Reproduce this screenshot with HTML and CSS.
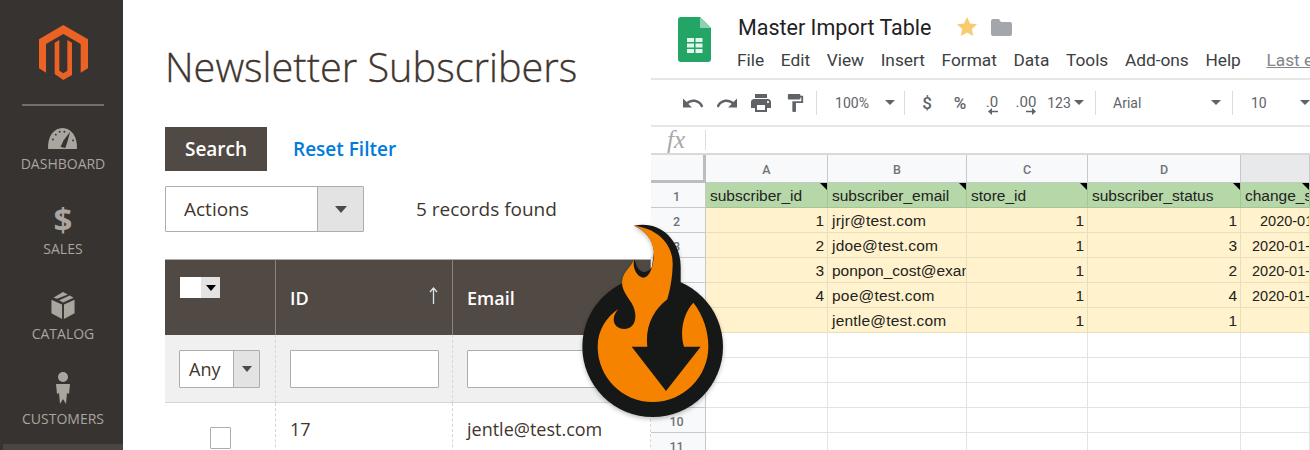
FILE: index.html
```html
<!DOCTYPE html>
<html lang="en">
  <head>
    <meta charset="UTF-8" />
    <title>Newsletter Subscribers to Master Import Table</title>
    <link rel="stylesheet" href="styles.css">
  </head>
  <body>
    <div class="admin">
      <nav class="sidebar">
        <svg class="magento-logo" viewBox="115 75 147 165">
          <path fill="#ec6124" d="M188 75L262 118V205L240 218V132L188 102L136 132V218L115 205V118Z"/>
          <path fill="#ec6124" d="M176 120L162 128V222L188 240L214 225V128L200 120V212L188 220L176 212Z"/>
        </svg>
        <div class="nav-rule"></div>
        <a class="nav-item nav-dashboard">
          <svg class="nav-icon" width="31" height="22" viewBox="0 0 32 23">
            <path fill="#aaa59f" d="M1 23C0 10 7 1 16 1S32 10 31 23Z"/>
            <path fill="#373330" d="M14 21L17 14L24 5L21 16L19 22Z"/>
            <g fill="#373330"><circle cx="6" cy="13" r="1"/><circle cx="9" cy="8" r="1"/><circle cx="13" cy="5" r="1"/><circle cx="18" cy="5" r="1"/><circle cx="27" cy="14" r="1"/></g>
          </svg>
          <span>DASHBOARD</span>
        </a>
        <a class="nav-item">
          <span class="dollar">$</span>
          <span>SALES</span>
        </a>
        <a class="nav-item">
          <svg class="nav-icon" width="26" height="27" viewBox="0 0 26 28">
            <path fill="#aaa59f" d="M1 8L12 13V28L1 22Z"/>
            <path fill="#aaa59f" d="M25 8L14 13V28L25 22Z"/>
            <path fill="#aaa59f" d="M13 0L18 2.500L7 7L3 6Z"/>
            <path fill="#aaa59f" d="M20 3.500L24 6L13 11L9 8.500Z"/>
          </svg>
          <span>CATALOG</span>
        </a>
        <a class="nav-item">
          <svg class="nav-icon" width="16" height="32" viewBox="0 0 16 32">
            <circle cx="8" cy="5" r="5" fill="#aaa59f"/>
            <path fill="#aaa59f" d="M1 12H15L14 22L12 21L11 32L8 27L5 32L4 21L2 22Z"/>
          </svg>
          <span>CUSTOMERS</span>
        </a>
        <div class="nav-current"></div>
      </nav>

      <main class="content">
        <h1 class="page-title">Newsletter Subscribers</h1>
        <div class="filter-actions">
          <button class="btn-search">Search</button>
          <a class="reset-link">Reset Filter</a>
        </div>
        <div class="mass-actions">
          <div class="select select-actions">
            <span class="select-label">Actions</span>
            <span class="select-arrow"><i class="caret"></i></span>
          </div>
          <span class="records">5 records found</span>
        </div>
        <div class="grid-table">
          <div class="th th-check">
            <div class="th-select"><span class="th-box"></span><span class="th-arrow"><i class="caret caret-black"></i></span></div>
          </div>
          <div class="th th-id">
            <span>ID</span>
            <svg class="sort-arrow" width="9" height="17" viewBox="0 0 9 17"><path fill="none" stroke="#d9e6f0" stroke-width="1.300" d="M4.500 17V1M1 5L4.500 1L8 5"/></svg>
          </div>
          <div class="th"><span>Email</span></div>
          <div class="filter-cell">
            <div class="select select-any">
              <span class="select-label">Any</span>
              <span class="select-arrow"><i class="caret"></i></span>
            </div>
          </div>
          <div class="filter-cell"><div class="filter-input"></div></div>
          <div class="filter-cell"><div class="filter-input"></div></div>
          <div class="td td-check"><span class="checkbox"></span></div>
          <div class="td">17</div>
          <div class="td">jentle@test.com</div>
        </div>
      </main>
    </div>

    <section class="sheets">
      <header class="doc-head">
        <svg class="sheets-logo" width="33" height="45" viewBox="0 0 33 45">
          <path fill="#23a566" d="M3 0H22L33 11V42Q33 45 30 45H3Q0 45 0 42V3Q0 0 3 0Z"/>
          <path fill="#8ed1b1" d="M22 0L33 11H22Z"/>
          <g fill="#e4f5ec">
            <rect x="9" y="21" width="7" height="4"/><rect x="17.500" y="21" width="7" height="4"/>
            <rect x="9" y="26.500" width="7" height="4"/><rect x="17.500" y="26.500" width="7" height="4"/>
            <rect x="9" y="32" width="7" height="4"/><rect x="17.500" y="32" width="7" height="4"/>
          </g>
        </svg>
        <div class="doc-info">
          <div class="doc-title-row">
            <span class="doc-title">Master Import Table</span>
            <svg class="star" width="20" height="19" viewBox="0 0 20 19"><path fill="#f7cb6e" d="M10 0L13 6.500L20 7.200L14.800 12L16.200 19L10 15.500L3.800 19L5.200 12L0 7.200L7 6.500Z"/></svg>
            <svg class="folder" width="21" height="17" viewBox="0 0 21 17"><path fill="#a3a6aa" d="M2 0H8L10 3H19Q21 3 21 5V15Q21 17 19 17H2Q0 17 0 15V2Q0 0 2 0Z"/></svg>
          </div>
          <div class="menu">
            <span>File</span><span>Edit</span><span>View</span><span>Insert</span><span>Format</span><span>Data</span><span>Tools</span><span>Add-ons</span><span>Help</span><span class="last-edit">Last edit</span>
          </div>
        </div>
      </header>

      <div class="toolbar">
        <svg width="20" height="10" viewBox="2 7 20 9"><path fill="#5f6368" d="M12.500 8c-2.650 0-5.050.99-6.900 2.600L2 7v9h9l-3.620-3.620c1.390-1.160 3.160-1.880 5.120-1.880 3.540 0 6.550 2.310 7.600 5.500l2.370-.78C21.080 11.030 17.150 8 12.500 8z"/></svg>
        <svg width="20" height="10" viewBox="2 7 20 9"><path fill="#5f6368" d="M18.400 10.600C16.550 8.990 14.150 8 11.500 8c-4.650 0-8.580 3.030-9.960 7.220L3.900 16c1.050-3.190 4.050-5.500 7.600-5.500 1.950 0 3.730.72 5.120 1.880L13 16h9V7l-3.600 3.600z"/></svg>
        <svg width="20" height="18" viewBox="2 3 20 18"><path fill="#5f6368" d="M19 8H5c-1.660 0-3 1.340-3 3v6h4v4h12v-4h4v-6c0-1.660-1.340-3-3-3zm-3 11H8v-5h8v5zm3-7c-.55 0-1-.45-1-1s.45-1 1-1 1 .45 1 1-.45 1-1 1zm-1-9H6v4h12V3z"/></svg>
        <svg width="17" height="18" viewBox="4 2 17 20"><path fill="#5f6368" d="M18 4V3c0-.55-.45-1-1-1H5c-.55 0-1 .45-1 1v4c0 .55.45 1 1 1h12c.55 0 1-.45 1-1V6h1v4H9v11c0 .55.45 1 1 1h2c.55 0 1-.45 1-1v-9h8V4h-3z"/></svg>
        <i class="tb-sep"></i>
        <span class="tb-text">100%</span>
        <i class="tb-caret"></i>
        <i class="tb-sep"></i>
        <span class="tb-text tb-strong">$</span>
        <span class="tb-text tb-strong">%</span>
        <span class="tb-dec">.0
          <svg class="dec-arrow" width="10" height="7" viewBox="0 0 10 7"><path fill="#5f6368" d="M0 3.500L4 0V2.700H10V4.300H4V7Z"/></svg>
        </span>
        <span class="tb-dec">.00
          <svg class="dec-arrow" width="10" height="7" viewBox="0 0 10 7"><path fill="#5f6368" d="M10 3.500L6 0V2.700H0V4.300H6V7Z"/></svg>
        </span>
        <span class="tb-text">123</span>
        <i class="tb-caret"></i>
        <i class="tb-sep"></i>
        <span class="tb-text tb-left">Arial</span>
        <i class="tb-caret"></i>
        <i class="tb-sep"></i>
        <span class="tb-text tb-left">10</span>
        <i class="tb-caret"></i>
      </div>

      <div class="formula-bar">
        <span class="fx">fx</span>
        <i class="fx-sep"></i>
      </div>

      <div class="sheet">
        <div class="corner"></div>
        <div class="col-head">A</div>
        <div class="col-head">B</div>
        <div class="col-head">C</div>
        <div class="col-head">D</div>
        <div class="col-head col-next"></div>

        <div class="row-head">1</div>
        <div class="cell green note">subscriber_id</div>
        <div class="cell green note">subscriber_email</div>
        <div class="cell green note">store_id</div>
        <div class="cell green note">subscriber_status</div>
        <div class="cell green note">change_status_at</div>

        <div class="row-head">2</div>
        <div class="cell yellow num">1</div>
        <div class="cell yellow email">jrjr@test.com</div>
        <div class="cell yellow num">1</div>
        <div class="cell yellow num">1</div>
        <div class="cell yellow date date-short">2020-01-20</div>

        <div class="row-head">3</div>
        <div class="cell yellow num">2</div>
        <div class="cell yellow email">jdoe@test.com</div>
        <div class="cell yellow num">1</div>
        <div class="cell yellow num">3</div>
        <div class="cell yellow date">2020-01-20</div>

        <div class="row-head">4</div>
        <div class="cell yellow num">3</div>
        <div class="cell yellow">ponpon_cost@example.com</div>
        <div class="cell yellow num">1</div>
        <div class="cell yellow num">2</div>
        <div class="cell yellow date">2020-01-20</div>

        <div class="row-head">5</div>
        <div class="cell yellow num">4</div>
        <div class="cell yellow email">poe@test.com</div>
        <div class="cell yellow num">1</div>
        <div class="cell yellow num">4</div>
        <div class="cell yellow date">2020-01-20</div>

        <div class="row-head">6</div>
        <div class="cell yellow num"></div>
        <div class="cell yellow email">jentle@test.com</div>
        <div class="cell yellow num">1</div>
        <div class="cell yellow num">1</div>
        <div class="cell yellow date"></div>

        <div class="row-head">7</div>
        <div class="cell"></div><div class="cell"></div><div class="cell"></div><div class="cell"></div><div class="cell"></div>
        <div class="row-head">8</div>
        <div class="cell"></div><div class="cell"></div><div class="cell"></div><div class="cell"></div><div class="cell"></div>
        <div class="row-head">9</div>
        <div class="cell"></div><div class="cell"></div><div class="cell"></div><div class="cell"></div><div class="cell"></div>
        <div class="row-head">10</div>
        <div class="cell"></div><div class="cell"></div><div class="cell"></div><div class="cell"></div><div class="cell"></div>
        <div class="row-head">11</div>
        <div class="cell"></div><div class="cell"></div><div class="cell"></div><div class="cell"></div><div class="cell"></div>
      </div>
    </section>

    <!-- badge sits on top of both screenshots -->
    <svg class="flame-badge" width="180" height="220" viewBox="0 0 540 660">
      <circle cx="278" cy="410" r="211" fill="#161818"/>
      <path fill="#161818" d="M222 47C300 30 362 90 362 170V260H300L270 215L282 125C280 90 255 60 222 47Z"/>
      <path fill="#161818" d="M224 148C228 172 240 186 252 186C262 186 272 180 279 165L290 205L240 215L210 190Z"/>
      <path fill="#f58300" d="M222 47C290 55 340 100 338 165C337 205 330 240 322 268C280 300 255 350 262 410H215L318 543L422 410H372C358 365 370 310 400 278C430 315 445 365 445 410C445 500 370 576 278 576C186 576 113 500 113 410C113 360 140 320 175 297C150 325 160 358 195 357C228 355 235 315 215 280C200 255 180 235 188 205C195 180 215 170 222 148C216 180 235 203 250 203C270 203 283 165 281 125C279 90 255 60 222 47Z"/>
    </svg>
  </body>
</html>
```

FILE: styles.css
```css
* {
  box-sizing: border-box;
}
html, body {
  height: 450px;
  overflow: hidden;
}
body {
  margin: 0;
  display: flex;
  background-color: #ffffff;
  position: relative;
}

/* left side, the shop admin */
.admin {
  width: 651px;
  height: 450px;
  flex: none;
  display: flex;
  overflow: hidden;
  font-family: "Open Sans", sans-serif;
  color: #41362f;
}
.sidebar {
  width: 123px;
  flex: none;
  height: 450px;
  background-color: #373330;
  display: flex;
  flex-direction: column;
  align-items: center;
  padding: 25px 0 0 3px;
  overflow: hidden;
}
.magento-logo {
  width: 49px;
  height: 55px;
  flex: none;
}
.nav-rule {
  width: 82px;
  height: 2px;
  background-color: #736e69;
  margin-top: 24px;
  flex: none;
}
.nav-item {
  height: 85px;
  display: flex;
  flex-direction: column;
  align-items: center;
  justify-content: flex-end;
  gap: 6px;
  font-size: 14px;
  line-height: 18px;
  color: #aaa59f;
  flex: none;
}
.nav-icon {
  display: block;
  flex: none;
}
.nav-dashboard {
  height: 67px;
}
.dollar {
  font-size: 33px;
  line-height: 28px;
  font-weight: 700;
}
.nav-current {
  align-self: stretch;
  height: 20px;
  margin-top: 16px;
  background-color: #4a4542;
  flex: none;
}

.content {
  flex: none;
  width: 528px;
  padding-left: 42px;
}
.page-title {
  margin: 0;
  padding-top: 41px;
  font-size: 39.700px;
  line-height: 52px;
  font-weight: 300;
  color: #41362f;
  -webkit-text-stroke: 0.3px #41362f;
  white-space: nowrap;
}
.filter-actions {
  display: flex;
  align-items: center;
  margin-top: 34px;
}
.btn-search {
  width: 102px;
  height: 44px;
  border: 0;
  background-color: #514943;
  color: #ffffff;
  font-family: "Open Sans", sans-serif;
  font-size: 19px;
  font-weight: 600;
  padding: 0;
}
.reset-link {
  margin-left: 26px;
  color: #007bdb;
  font-size: 19px;
  font-weight: 600;
}
.mass-actions {
  display: flex;
  align-items: center;
  margin-top: 15px;
}
.select {
  display: flex;
  background-color: #ffffff;
  border: 1px solid #adadad;
  border-radius: 1px;
}
.select-actions {
  width: 199px;
  height: 46px;
}
.select-label {
  flex: 1;
  display: flex;
  align-items: center;
  font-size: 18px;
}
.select-actions .select-label {
  padding-left: 18px;
  font-size: 19px;
}
.select-any .select-label {
  padding-left: 9px;
}
.select-arrow {
  width: 46px;
  flex: none;
  display: flex;
  align-items: center;
  justify-content: center;
  background-color: #e3e3e3;
  border-left: 1px solid #adadad;
}
.caret {
  display: block;
  width: 0;
  height: 0;
  border-left: 6px solid transparent;
  border-right: 6px solid transparent;
  border-top: 7px solid #514943;
}
.caret-black {
  border-left-width: 5px;
  border-right-width: 5px;
  border-top: 6px solid #000000;
}
.records {
  margin-left: 52px;
  font-size: 19px;
}

.grid-table {
  display: grid;
  grid-template-columns: 111px 177px 198px;
  grid-template-rows: 76px 68px auto;
  margin-top: 27px;
  width: 486px;
}
.th {
  background-color: #514943;
  color: #ffffff;
  font-size: 18px;
  font-weight: 600;
  padding: 26px 14px 0;
  border-right: 1px solid #8a837e;
  border-top: 1px solid #adadad;
  display: flex;
  justify-content: space-between;
  white-space: nowrap;
}
.th:last-of-type {
  border-right: 0;
}
.th-check {
  padding: 17px 15px 0;
}
.th-select {
  display: flex;
  width: 40px;
  height: 21px;
}
.th-box {
  width: 21px;
  background-color: #ffffff;
}
.th-arrow {
  width: 19px;
  background-color: #e3e3e3;
  display: flex;
  align-items: center;
  justify-content: center;
}
.sort-arrow {
  margin-top: 1px;
  margin-right: 0;
}
.filter-cell {
  background-color: #f0f0f0;
  padding: 15px 14px 0;
  border-right: 1px dashed #d6d6d6;
  border-bottom: 1px solid #d6d6d6;
}
.filter-cell .select-any {
  width: 81px;
  height: 38px;
}
.select-any .select-arrow {
  width: 26px;
}
.select-any .caret {
  border-left-width: 5px;
  border-right-width: 5px;
  border-top-width: 6px;
}
.filter-input {
  width: 149px;
  height: 38px;
  background-color: #ffffff;
  border: 1px solid #adadad;
  border-radius: 1px;
}
.filter-cell:last-of-type {
  border-right: 0;
}
.td {
  padding: 14px 14px 0;
  font-size: 18px;
  height: 60px;
  border-right: 1px dashed #d6d6d6;
  white-space: nowrap;
}
.td:first-of-type {
  border-left: 1px solid #d6d6d6;
}
.td-check {
  padding: 24px 0 0 45px;
}
.checkbox {
  display: block;
  width: 21px;
  height: 22px;
  border: 1px solid #adadad;
  border-radius: 1px;
}

/* right side, the spreadsheet */
.sheets {
  width: 659px;
  flex: none;
  height: 450px;
  overflow: hidden;
  font-family: Roboto, sans-serif;
  color: #3c4043;
}
.doc-head {
  display: flex;
  height: 78px;
  padding: 17px 0 0 27px;
}
.sheets-logo {
  flex: none;
}
.doc-info {
  margin-left: 26px;
  margin-top: -6px;
  flex: 1;
  min-width: 0;
}
.doc-title-row {
  display: flex;
  align-items: center;
  height: 24px;
  margin-top: 3px;
  padding-left: 1px;
}
.doc-title {
  font-size: 21.500px;
  line-height: 24px;
  color: #1f2124;
  margin-top: 3px;
}
.star {
  margin-left: 26px;
  flex: none;
}
.folder {
  margin-left: 14px;
  margin-top: 2px;
  flex: none;
}
.menu {
  display: flex;
  gap: 16.650px;
  margin-top: 12px;
  font-size: 17.300px;
  line-height: 20px;
  white-space: nowrap;
}
.last-edit {
  margin-left: 9px;
  color: #80868b;
  text-decoration: underline;
}
.toolbar {
  height: 49px;
  border-top: 2px solid #e6e6e6;
  border-bottom: 2px solid #e6e6e6;
  padding-left: 25px;
  display: grid;
  grid-template-columns: 34px 34px 34px 34px 8px 64px 12px 16px 30px 36px 28px 40px 26px 14px 18px 106px 12px 20px 53px 20px;
  align-items: center;
  justify-items: center;
  color: #5f6368;
}
.tb-sep {
  width: 1px;
  height: 24px;
  background-color: #dadce0;
}
.tb-text {
  font-size: 14px;
  white-space: nowrap;
}
.tb-strong {
  font-size: 17px;
  font-weight: 500;
}
.tb-left {
  justify-self: start;
  padding-left: 9px;
}
.tb-caret {
  width: 0;
  height: 0;
  border-left: 5px solid transparent;
  border-right: 5px solid transparent;
  border-top: 5px solid #5f6368;
}
.tb-dec {
  font-size: 15px;
  line-height: 16px;
  position: relative;
  white-space: nowrap;
  top: -1px;
}
.dec-arrow {
  position: absolute;
  right: 0;
  top: 14px;
}
.formula-bar {
  height: 28px;
  border-bottom: 2px solid #d9d9d9;
  display: flex;
  align-items: center;
  padding-left: 16px;
}
.fx {
  font-family: "Liberation Serif", serif;
  font-style: italic;
  font-size: 25px;
  color: #a8a8a8;
  width: 38px;
  line-height: 24px;
}
.fx-sep {
  width: 1px;
  height: 20px;
  background-color: #dadce0;
}
.sheet {
  display: grid;
  grid-template-columns: 55px 122px 139px 121px 153px 69px;
  grid-template-rows: 28px repeat(11, 25px);
  font-family: "Liberation Sans", sans-serif;
  font-size: 15.500px;
  color: #222222;
}
.corner {
  background-color: #f8f9fa;
  border-right: 3px solid #bdbdbd;
  border-bottom: 3px solid #bdbdbd;
}
.col-head {
  background-color: #f8f9fa;
  border-right: 1px solid #c8c8c8;
  border-bottom: 1px solid #c8c8c8;
  display: flex;
  align-items: center;
  justify-content: center;
  padding-top: 1px;
  font-family: Roboto, sans-serif;
  font-size: 12.500px;
  font-weight: 500;
  color: #6f7377;
}
.col-next {
  background-color: #e8e9ea;
}
.row-head {
  background-color: #f8f9fa;
  border-right: 1px solid #c8c8c8;
  border-bottom: 1px solid #c8c8c8;
  display: flex;
  align-items: center;
  justify-content: center;
  padding: 2px 3px 0 0;
  font-family: Roboto, sans-serif;
  font-size: 12.500px;
  font-weight: 500;
  color: #6f7377;
}
.cell {
  border-right: 1px solid #e2e3e3;
  border-bottom: 1px solid #e2e3e3;
  padding: 1px 3px 0 4px;
  line-height: 24px;
  white-space: nowrap;
  overflow: hidden;
  position: relative;
}
.green {
  background-color: #b6d7a8;
  border-color: #a5c498;
}
.yellow {
  background-color: #fff2cc;
  border-color: #e8dfbf;
}
.num {
  text-align: right;
}
.email {
  letter-spacing: 0.2px;
}
.date {
  padding-left: 11px;
  font-size: 14.500px;
}
.date-short {
  padding-left: 19px;
}
.note::after {
  content: "";
  position: absolute;
  top: 0;
  right: 0;
  border-top: 7px solid #000000;
  border-left: 7px solid transparent;
}

.flame-badge {
  position: absolute;
  left: 560px;
  top: 210px;
  filter: drop-shadow(0 2px 2px rgba(0, 0, 0, 0.25));
}
```
